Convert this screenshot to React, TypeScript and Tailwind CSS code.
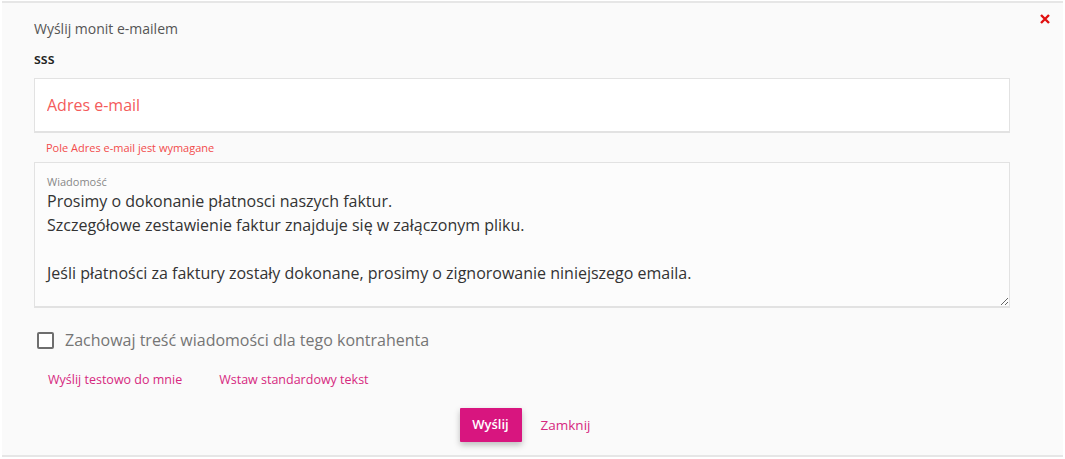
import React, { useState } from 'react';

const MESSAGE = `Prosimy o dokonanie płatnosci naszych faktur.
Szczegółowe zestawienie faktur znajduje się w załączonym pliku.

Jeśli płatności za faktury zostały dokonane, prosimy o zignorowanie niniejszego emaila.`;

export default function App() {
  const [email, setEmail] = useState('');
  const [message, setMessage] = useState(MESSAGE);
  const [keep, setKeep] = useState(false);

  return (
    <div className="h-[459px] w-[1065px] bg-white px-[2px] pt-[1px] font-['Open_Sans',sans-serif]">
      <div className="relative h-[456px] border-y-2 border-[#e6e6e6] bg-[#fafafa] pl-[32px] pr-[53px]">
        <button className="absolute right-[12px] top-[10px] text-[#e01010]">
          <svg width="12" height="12" viewBox="0 0 12 12">
            <path d="M2 2 L10 10 M10 2 L2 10" stroke="currentColor" strokeWidth="2.4" />
          </svg>
        </button>

        <div className="pt-[16px] text-[14px] leading-[20px] text-[#555]">Wyślij monit e-mailem</div>
        <div className="mt-[10px] text-[14px] font-semibold leading-[20px] text-[#222]">sss</div>

        <div className="mt-[9px] h-[55px] border border-b-2 border-[#e2e2e2] bg-white">
          <input
            value={email}
            onChange={e => setEmail(e.target.value)}
            placeholder="Adres e-mail"
            className="h-full w-full bg-transparent px-[12px] text-[16px] text-[#333] outline-none placeholder:text-[#f45b5b]"
          />
        </div>
        <div className="ml-[12px] mt-[7px] text-[11px] leading-[15px] text-[#f24b4b]">Pole Adres e-mail jest wymagane</div>

        <div className="mt-[7px] flex h-[146px] flex-col border border-b-2 border-[#e2e2e2] bg-[#fcfcfc] px-[12px] pt-[12px]">
          <span className="text-[11px] leading-[14px] text-[#888]">Wiadomość</span>
          <textarea
            value={message}
            onChange={e => setMessage(e.target.value)}
            className="-mx-[12px] flex-1 resize-y bg-transparent px-[12px] text-[16px] leading-[24px] text-[#333] outline-none"
          />
        </div>

        <label className="mt-[22px] flex cursor-pointer items-center gap-[11px] pl-[3px]">
          <input type="checkbox" checked={keep} onChange={e => setKeep(e.target.checked)} className="peer sr-only" />
          <span className="h-[17px] w-[17px] rounded-[2px] border-2 border-[#6e6e6e] bg-white" />
          <span className="text-[16px] leading-[20px] text-[#757575]">Zachowaj treść wiadomości dla tego kontrahenta</span>
        </label>

        <div className="mt-[22px] flex gap-[37px] pl-[14px] text-[12.5px] leading-[16px] text-[#d6287f]">
          <button>Wyślij testowo do mnie</button>
          <button>Wstaw standardowy tekst</button>
        </div>

        <div className="mt-[20px] flex items-center justify-center gap-[19px] pl-[6px]">
          <button className="h-[34px] w-[62px] rounded-[1px] bg-[#d8157f] text-[13px] font-semibold text-white shadow-[0_3px_6px_rgba(0,0,0,0.25)]">
            Wyślij
          </button>
          <button className="text-[13.5px] text-[#d6287f]">Zamknij</button>
        </div>
      </div>
    </div>
  );
}
